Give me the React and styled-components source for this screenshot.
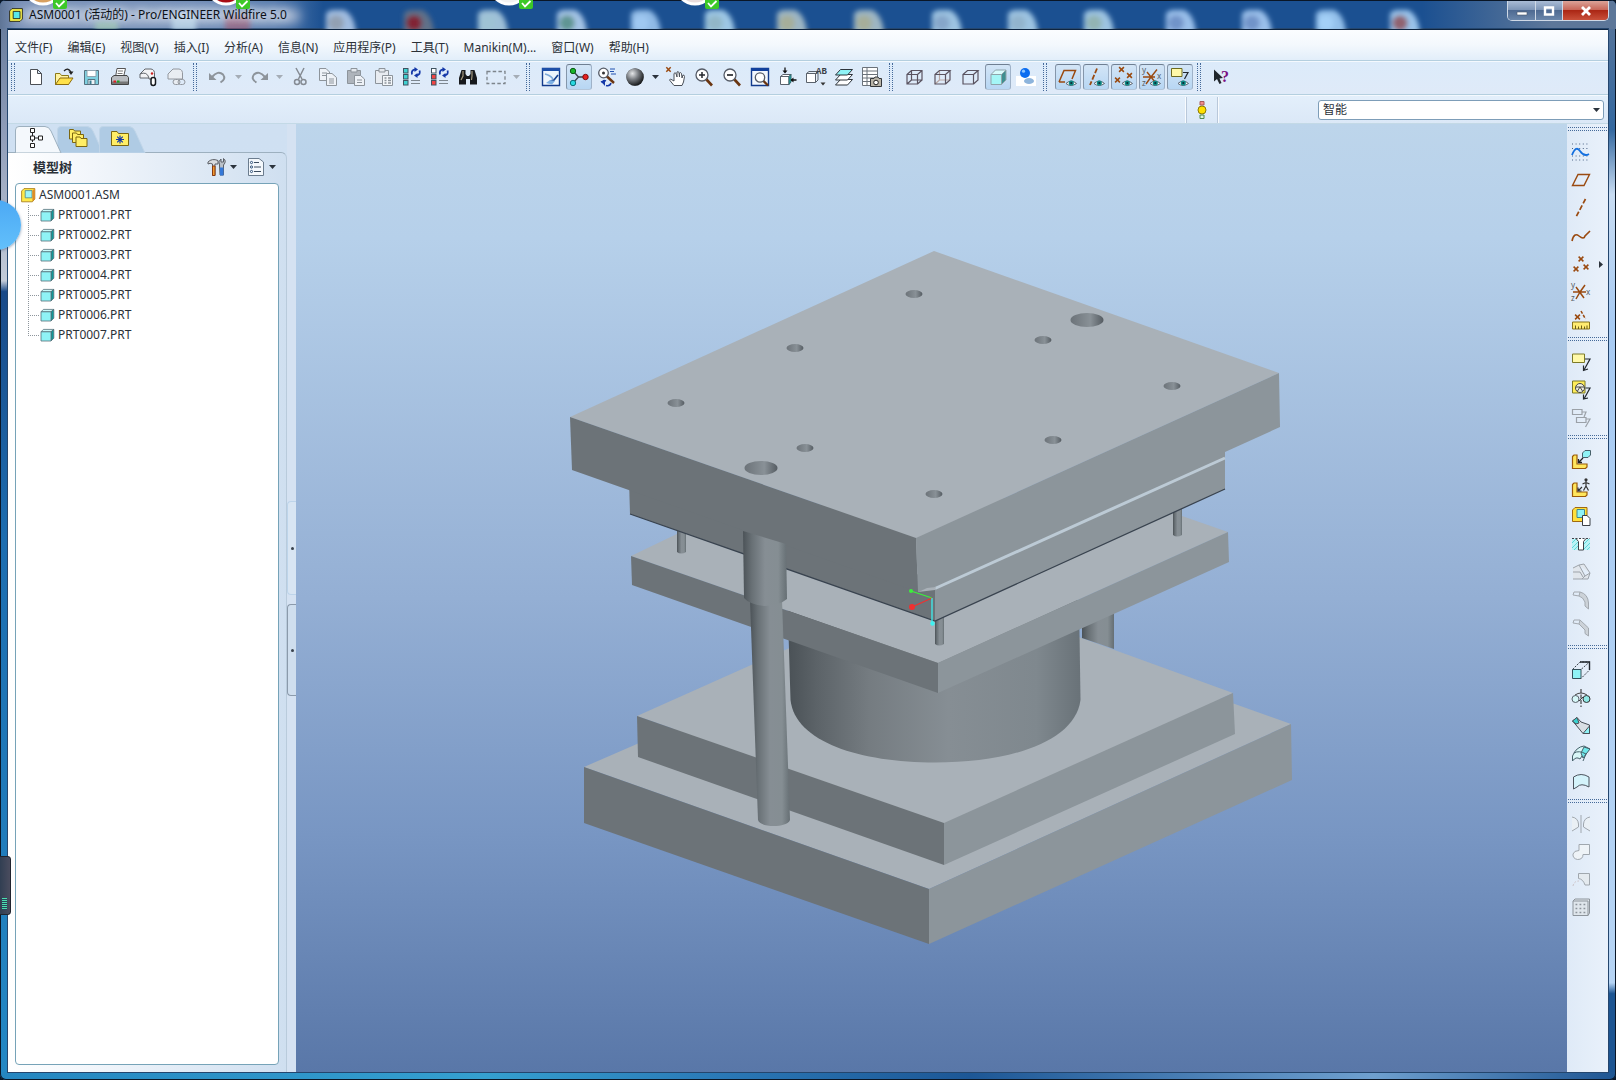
import React from 'react';
import styled, { createGlobalStyle, css } from 'styled-components';

const GlobalStyle = createGlobalStyle`
  * { box-sizing: border-box; }
  html, body { margin: 0; padding: 0; background: #0a1626; }
  body, button, select {
    font-family: "Noto Sans", "Noto Sans CJK SC", sans-serif;
    font-size: 12px;
    line-height: 16px;
    color: #2b3138;
  }
`;

/* ---------- window chrome ---------- */

const Window = styled.div`
  position: relative;
  display: flex;
  flex-direction: column;
  height: 100vh;
  min-height: 960px;
  padding: 0 8px 8px;
  overflow: hidden;
  border-radius: 6px;
  background:
    linear-gradient(90deg, #2586c0, #35a0d0 30%, #2a78b6 45%, #1d5796 60%, #6fa0cf 85%, #1e5592) bottom / 100% 8px no-repeat,
    linear-gradient(#5f7596, #8e9cb8 12%, #c3cbd8 26%, #1a4a88 27%, #1d6db0 50%, #2488c4 100%) left / 8px 100% no-repeat,
    linear-gradient(#5c7699, #34689f 12%, #c8dcf2 18%, #a8cbf3 30%, #b6d4f4 91%, #1d5592 92%) right / 8px 100% no-repeat,
    #1d4f8d;
  box-shadow: inset 0 0 0 1px #0a1626;
`;

const TitleBar = styled.header`
  display: grid;
  grid-template-columns: minmax(0, 1fr) auto;
  align-items: start;
  flex: none;
  height: 29px;
  margin: 0 -8px;
  padding-right: 7px;
  border-top: 1px solid #0a1626;
  background:
    linear-gradient(90deg, #5f7596, rgba(130, 150, 185, 0.9) 1%, rgba(140, 160, 195, 0.75) 12%, rgba(120, 148, 190, 0.6) 17%, rgba(29, 79, 141, 0) 20%),
    linear-gradient(90deg, rgba(29, 79, 141, 0) 88%, #5d7799 96%),
    #1b5091;
`;

const Backdrop = styled.svg`
  position: absolute;
  top: 1px;
  left: 0;
  width: 1616px;
  height: 28px;
`;

const Caption = styled.div`
  position: relative;
  display: flex;
  align-items: center;
  gap: 5px;
  height: 28px;
  padding-left: 8px;
`;

const WindowTitle = styled.h1`
  margin: 0;
  font-size: 12px;
  line-height: 16px;
  font-weight: 400;
  color: #0c1016;
  text-shadow: 0 0 6px #c9d6e8, 0 0 8px #c9d6e8;
  white-space: nowrap;
`;

const CaptionButtons = styled.div`
  position: relative;
  display: flex;
  border: 1px solid #cfd9e6;
  border-top: 0;
  border-radius: 0 0 5px 5px;
  overflow: hidden;
`;

const CaptionButton = styled.button`
  display: grid;
  place-items: center;
  width: ${(p) => (p.$close ? 46 : 27)}px;
  height: 19px;
  padding: 0;
  border: 0;
  border-left: ${(p) => (p.$first ? '0' : '1px solid #cfd9e6')};
  background: ${(p) =>
    p.$close
      ? 'linear-gradient(#dba398, #c8685a 45%, #ab2715 50%, #c9503a)'
      : 'linear-gradient(#a9bcd6, #7f97b8 45%, #4e6a92 50%, #6a86aa)'};
`;

const Client = styled.div`
  display: flex;
  flex-direction: column;
  flex: 1;
  min-height: 0;
  border-top: 1px solid #0d2440;
  background: #dde9f7;
  box-shadow: 0 0 0 1px #24466e;
`;

const MenuBar = styled.nav`
  display: flex;
  align-items: center;
  gap: 1px;
  flex: none;
  height: 31px;
  padding-top: 5px;
  border-bottom: 1px solid #b4cfdf;
  background: linear-gradient(#fbfdff, #f3f8fd 50%, #e2eefa);
`;

const MenuItem = styled.button`
  padding: 0 7px;
  border: 0;
  background: none;
  white-space: nowrap;
`;

/* ---------- tool bars ---------- */

const ToolStrip = styled.div`
  display: flex;
  flex: none;
  ${(p) =>
    p.$vertical
      ? css`
          flex-direction: column;
          width: 41px;
          background: linear-gradient(90deg, #dfeaf7, #e9f1fb);
        `
      : css`
          align-items: center;
          height: 34px;
          padding-bottom: 2px;
          border-top: 1px solid #f4f9fe;
          border-bottom: 1px solid #b4cfdf;
          background: linear-gradient(#dcebfa, #dfeaf8);
        `}
`;

const Handle = styled.div`
  flex: none;
  ${(p) =>
    p.$vertical
      ? css`
          height: 4px;
          margin: 3px 1px 7px 1px;
          border-top: 1px dotted #456a9a;
          border-bottom: 1px dotted #456a9a;
        `
      : css`
          width: 4px;
          height: 28px;
          margin: 0 7px 0 3px;
          border-left: 1px dotted #456a9a;
          border-right: 1px dotted #456a9a;
        `}
`;

const ToolButton = styled.button`
  display: grid;
  place-items: center;
  flex: none;
  width: ${(p) => (p.$narrow ? 20 : 26)}px;
  height: 26px;
  margin: 1px;
  padding: 0;
  border: 1px solid transparent;
  border-radius: 3px;
  background: none;
  ${(p) =>
    p.$pressed &&
    css`
      border-color: #6f7f92 #9fb2c8 #b4c6da #8596aa;
      background: linear-gradient(#d3e5f6, #b7d6f3);
    `}
`;

const Glyph = styled.svg`
  display: block;
  overflow: visible;
`;

const ArrowButton = styled.button`
  display: grid;
  place-items: center;
  width: 13px;
  height: 20px;
  padding: 0;
  border: 0;
  background: none;
`;

const FilterRow = styled.div`
  display: flex;
  justify-content: flex-end;
  align-items: center;
  gap: 100px;
  flex: none;
  height: 29px;
  padding-right: 4px;
  border-top: 1px solid #f4f9fe;
  border-bottom: 1px solid #c3d9e6;
  background: linear-gradient(#e3effb, #dbe8f7);
`;

const StatusLight = styled.div`
  display: grid;
  place-items: center;
  width: 32px;
  height: 26px;
  border: solid #b9c8da;
  border-width: 0 1px;
  box-shadow: 1px 0 0 #f8fbfe, -1px 0 0 #f8fbfe;
`;

const SelectBox = styled.div`
  position: relative;
  width: 286px;
`;

const FilterSelect = styled.select`
  appearance: none;
  display: block;
  width: 100%;
  height: 20px;
  padding: 0 20px 0 4px;
  border: 1px solid #7d9db8;
  border-radius: 3px;
  background: #fff;
`;

const SelectArrow = styled.svg`
  position: absolute;
  right: 4px;
  top: 8px;
  pointer-events: none;
`;

/* ---------- navigator ---------- */

const Workspace = styled.main`
  display: flex;
  flex: 1;
  min-height: 0;
`;

const Navigator = styled.aside`
  display: flex;
  flex: none;
  width: 288px;
  background: linear-gradient(#cfe0f2, #d3e2f3);
`;

const NavColumn = styled.div`
  display: flex;
  flex-direction: column;
  flex: 1;
  min-width: 0;
`;

const TabList = styled.div`
  display: flex;
  flex: none;
  height: 28px;
  padding: 2px 0 0 7px;
`;

const Tab = styled.button`
  position: relative;
  display: grid;
  place-items: center start;
  width: 42px;
  height: 26px;
  padding: 0 0 2px 11px;
  border: 0;
  background: none;
  z-index: ${(p) => (p.$active ? 1 : 0)};
`;

const TabShape = styled.svg`
  position: absolute;
  left: 0;
  top: 0;
`;

const TabGlyph = styled.span`
  position: relative;
  display: block;
  line-height: 0;
`;

const Panel = styled.section`
  display: flex;
  flex-direction: column;
  flex: 1;
  min-height: 0;
  padding: 0 7px 7px;
  border-top: 1px solid #9db0bf;
  border-right: 1px solid #b9cbdc;
  border-radius: 0 6px 0 0;
  background: linear-gradient(90deg, #ffffff, #f2f6fb 30%, #cfdff0);
`;

const PanelHeader = styled.div`
  display: flex;
  align-items: center;
  flex: none;
  height: 30px;
  padding: 0 0 3px 18px;
`;

const PanelTitle = styled.h2`
  flex: 1;
  margin: 0;
  font-size: 13px;
  line-height: 16px;
  font-weight: 700;
`;

const HeaderTool = styled.div`
  display: flex;
  align-items: center;
  margin-left: 4px;
`;

const Tree = styled.ul`
  flex: 1;
  min-height: 0;
  margin: 0;
  padding: 1px 0 0 4px;
  list-style: none;
  border: 1px solid #76a3b8;
  border-radius: 4px;
  background: #fff;
`;

const Branch = styled.ul`
  margin: 0 0 0 8px;
  padding: 0;
  list-style: none;
`;

const Leaf = styled.li`
  display: flex;
  align-items: center;
  height: 20px;
  background:
    linear-gradient(#fff, #fff) 0 11px / ${(p) => (p.$last ? '1px 9px' : '0 0')} no-repeat,
    repeating-linear-gradient(90deg, #8d959c 0 1px, transparent 1px 2px) 0 10px / 12px 1px no-repeat,
    repeating-linear-gradient(#8d959c 0 1px, transparent 1px 2px) 0 0 / 1px 100% no-repeat;
  padding-left: 11px;
`;

const NodeButton = styled.button`
  display: flex;
  align-items: center;
  gap: 3px;
  height: 20px;
  padding: 0;
  border: 0;
  background: none;
`;

const Sash = styled.div`
  display: flex;
  flex-direction: column;
  justify-content: flex-start;
  gap: 9px;
  flex: none;
  width: 9px;
  padding-top: 377px;
  background: #d5e2f2;
`;

const Grip = styled.button`
  display: grid;
  place-items: center;
  width: 9px;
  height: ${(p) => (p.$raised ? 92 : 94)}px;
  padding: 0;
  border: 1px solid ${(p) => (p.$raised ? '#8b9aab' : '#bdd4ea')};
  border-right: 0;
  border-radius: 4px 0 0 4px;
  background: ${(p) => (p.$raised ? '#cfdeee' : '#d8e5f3')};
  &::after {
    content: "";
    width: 3px;
    height: 3px;
    border-radius: 50%;
    background: #39424e;
  }
`;

const Viewport = styled.section`
  flex: 1;
  min-width: 0;
  background: linear-gradient(#bdd5eb, #b6d0ea 12%, #94afd4 50%, #7896c3 75%, #5977a8);
`;

const Scene = styled.svg`
  display: block;
  width: 100%;
  height: 100%;
`;

/* ---------- desktop widgets that overlap the window ---------- */

const Badges = styled.svg`
  position: absolute;
  left: 0;
  top: 0;
  pointer-events: none;
`;

const Bubble = styled.div`
  position: absolute;
  left: -29px;
  top: 200px;
  width: 50px;
  height: 50px;
  border-radius: 50%;
  background: linear-gradient(#4ca9f4, #62c0fb);
  box-shadow: 0 1px 3px rgba(60, 90, 130, 0.6);
`;

const Meter = styled.div`
  position: absolute;
  left: -3px;
  top: 856px;
  display: flex;
  align-items: flex-end;
  width: 14px;
  height: 59px;
  padding: 4px;
  border: 1px solid #20242e;
  border-radius: 3px;
  background: linear-gradient(90deg, #2c3c50, #4a4c5e);
  &::after {
    content: "";
    flex: none;
    width: 5px;
    height: 12px;
    background: repeating-linear-gradient(#4be0b0 0 1px, #26465a 1px 2px);
  }
`;

/* ---------- icons, all on a 20 x 20 grid ---------- */

const BR = '#9a4a10';
const CY = '#8ff3f6';

const Eye = () => (
  <g>
    <path d="M8 16.500Q13 11.500 18.500 16.500Q13 20.500 8 16.500Z" fill="#fff" stroke="#5d6670" strokeWidth="1" />
    <circle cx="13.300" cy="16" r="2.600" fill="#0d8a86" />
    <circle cx="13.300" cy="16" r="1.100" fill="#082c38" />
  </g>
);

const Cross = ({ x, y, s = 2, c = BR }) => (
  <path d={`M${x - s} ${y - s}l${2 * s} ${2 * s}M${x + s} ${y - s}l${-2 * s} ${2 * s}`} stroke={c} strokeWidth="1.500" />
);

const Cube = ({ front, side = front, stroke = '#4e5661' }) => (
  <g stroke={stroke} fill={front} strokeLinejoin="round">
    <path d="M3 7.500L7.500 3H18L13.500 7.500Z" fill="#d8fcfc" />
    <path d="M13.500 7.500L18 3V13L13.500 17.500Z" fill={side} />
    <path d="M3 7.500H13.500V17.500H3Z" />
  </g>
);

const Lens = ({ children }) => (
  <g>
    <path d="M12 12L18 18.500" stroke="#6a3510" strokeWidth="2.600" />
    <circle cx="8" cy="8" r="6" fill="#fff" stroke="#555b66" strokeWidth="1.300" />
    {children}
  </g>
);

const Bracket = () => (
  <path d="M1.500 6.500L3 5H6V14H16V17L14.500 18.500H1.500Z" fill="#ffe65c" stroke="#9a5a08" strokeWidth="1.200" />
);

const Regen = ({ c }) => (
  <g>
    {[1, 7, 13].map((y, i) => (
      <rect key={y} x="1.500" y={y + 0.500} width="4.500" height="4.500" fill={i === 0 && c === 'red' ? '#fff' : c === 'red' ? '#f04444' : '#3fd0d0'} stroke="#3f5260" />
    ))}
    <path d="M10 7.500Q9 3 13 2.500M17.500 3.500Q19 7.500 14.500 8.500" fill="none" stroke="#1438a8" strokeWidth="1.800" />
    <path d="M12.500 0L16 2.500L12.500 5ZM15.500 6L12 8.500L15.500 11Z" fill="#1438a8" />
    <path d="M9 13.500H18M9 16.500H18" stroke="#7d868f" />
  </g>
);

const Folder = ({ x, y, w = 11, h = 8 }) => (
  <path d={`M${x} ${y}h4l1 1.500h${w - 5}v${h}h${-w}Z`} fill="#ffee66" stroke="#7c6710" />
);

const ICONS = {
  app: (
    <g stroke="#111">
      <path d="M2 5L5 2H18V15L15 18H2Z" fill="#f4ee4a" />
      <path d="M6.500 5.500H15V14.500H6.500Z" fill="#59e8ea" />
    </g>
  ),
  newFile: <path d="M4.500 2.500H11.500L15.500 6.500V17.500H4.500ZM11.500 2.500V6.500H15.500" fill="#fff" stroke="#4b4f55" />,
  open: (
    <g>
      <path d="M1.500 17.500V6.500H6L7.500 8.500H14.500V17.500Z" fill="#fff3a0" stroke="#8c7a18" />
      <path d="M1.500 17.500L6 11H19L14.500 17.500Z" fill="#ffe14a" stroke="#8c6c10" />
      <path d="M10 4Q14 0 17 5" fill="none" stroke="#222" strokeWidth="1.300" />
      <path d="M14.500 4.500H19.500L17 8Z" fill="#222" />
    </g>
  ),
  save: (
    <g>
      <path d="M2.500 3.500H16.500V17.500H2.500Z" fill="#7fd0e0" stroke="#56707e" />
      <path d="M5 3.500H14V9.500H5Z" fill="#fff" stroke="#8fa4b0" />
      <path d="M6 12.500H13V17.500H6Z" fill="#eef4f8" stroke="#56707e" />
      <path d="M7.500 13.500H9.500V17H7.500Z" fill="#3a7c90" />
    </g>
  ),
  print: (
    <g>
      <path d="M7 1.500H15.500L13.500 10H5.500Z" fill="#fff" stroke="#555" />
      <path d="M8 4H13M7.500 6.500H12.500" stroke="#777" />
      <path d="M1.500 10.500L4 8.500H17L18.500 10.500V17.500H1.500Z" fill="#b9bcc0" stroke="#444" />
      <path d="M2 14.500H18V17H2Z" fill="#777" />
      <path d="M3.500 13.500H6V15.500H3.500Z" fill="#e02020" />
      <path d="M7 13.500H9.500V15.500H7Z" fill="#20a020" />
    </g>
  ),
  mail: (
    <g>
      <path d="M2 11V7L7 2H13Q17 2.500 16.500 8V12H11V11Z" fill="#f2f3f5" stroke="#62666c" />
      <path d="M2 7Q9 4 11 11" fill="none" stroke="#62666c" />
      <circle cx="14" cy="6.500" r="1.200" fill="#c22" />
      <rect x="13" y="10.500" width="4.500" height="8" rx="2.200" fill="#fff" stroke="#15181c" strokeWidth="1.500" />
    </g>
  ),
  link: (
    <g stroke="#92979e" fill="#e9edf2">
      <path d="M2 11V7L7 2H13Q17 2.500 16.500 8V12H2Z" />
      <rect x="7" y="12.500" width="7" height="5" rx="2.500" />
      <rect x="12" y="12.500" width="7" height="5" rx="2.500" fill="none" />
    </g>
  ),
  undo: (
    <g>
      <path d="M4 10Q10 3 15 7.500Q18.500 12 12.500 15.500" fill="none" stroke="#8d949b" strokeWidth="2" />
      <path d="M1 6V13H8.500Z" fill="#8d949b" />
    </g>
  ),
  redo: (
    <g>
      <path d="M16 10Q10 3 5 7.500Q1.500 12 7.500 15.500" fill="none" stroke="#8d949b" strokeWidth="2" />
      <path d="M19 6V13H11.500Z" fill="#8d949b" />
    </g>
  ),
  cut: (
    <g fill="none" stroke="#858b93" strokeWidth="1.500">
      <path d="M6 1L12 12M14 1L8.500 12" />
      <circle cx="7" cy="15" r="2.500" />
      <circle cx="13.500" cy="15" r="2.500" />
    </g>
  ),
  copy: (
    <g fill="#eef2f7" stroke="#8d949b">
      <path d="M1.500 1.500H8L11.500 5V13.500H1.500ZM4 6H9M4 8.500H9" />
      <path d="M8.500 6.500H14L18.500 10.500V18.500H8.500ZM11 12H16M11 14H16M11 16H16" />
    </g>
  ),
  paste: (
    <g stroke="#8d949b">
      <path d="M1.500 3.500H14.500V16.500H1.500Z" fill="#aeb4bb" />
      <path d="M5 1.500H11V5H5Z" fill="#e4e8ed" />
      <path d="M8.500 8.500H14.500L18.500 12V18.500H8.500ZM11 13H16M11 15.500H16" fill="#eef2f7" />
    </g>
  ),
  pasteSpecial: (
    <g stroke="#8d949b">
      <path d="M1.500 3.500H14.500V16.500H1.500Z" fill="#e8ecf1" />
      <path d="M5 1.500H11V5H5Z" fill="#e4e8ed" />
      <path d="M8.500 8.500H18.500V18.500H8.500Z" fill="#f4f7fa" />
      <path d="M10.500 11H12.500M14 11H17M10.500 13.500H12.500M14 13.500H17M10.500 16H12.500M14 16H17" strokeWidth="1.400" />
    </g>
  ),
  regen: <Regen c="teal" />,
  regenAll: <Regen c="red" />,
  find: (
    <g fill="#17191c">
      <path d="M3.500 3H7.500V7L9 9H11L12.500 7V3H16.500L19 11V17.500H12V12H8V17.500H1V11Z" />
      <path d="M5 4V9L3 13M14 4V9L13.500 13" stroke="#a49a80" fill="none" strokeWidth="1.200" />
    </g>
  ),
  select: <path d="M1 4.500H19V16.500H1Z" fill="none" stroke="#7e858c" strokeWidth="1.300" strokeDasharray="3.500 2.200" />,
  repaint: (
    <g>
      <path d="M1.500 1.500H18.500V18.500H1.500Z" fill="#eef5fc" stroke="#123a8c" strokeWidth="1.400" />
      <path d="M1 1H19V4H1Z" fill="#1d4fa8" />
      <path d="M4 7Q9 8 12 12" fill="none" stroke="#7da9d8" strokeWidth="1.500" />
      <path d="M9 14L13 13L17 8" fill="none" stroke="#17418e" strokeWidth="1.700" />
      <path d="M9 13L14 14L11 17.500L5 16Z" fill="#7db0e4" />
    </g>
  ),
  spin: (
    <g>
      <path d="M5 5L9.500 10H17M9.500 10L4 16" fill="none" stroke="#3c444d" strokeWidth="1.300" />
      <circle cx="4" cy="4" r="2.700" fill="#18b428" stroke="#0a5c14" />
      <circle cx="16.500" cy="10" r="2.700" fill="#e62020" stroke="#7c0c0c" />
      <circle cx="4" cy="16" r="2.700" fill="#28d8e0" stroke="#0c707c" />
    </g>
  ),
  orient: (
    <g>
      <path d="M9.500 9L17 16" stroke="#6a3510" strokeWidth="2.400" />
      <circle cx="6.500" cy="6" r="4.800" fill="#fff" stroke="#555b66" strokeWidth="1.300" />
      <circle cx="6.500" cy="6" r="1.500" fill="#333" />
      <path d="M13 2H18M13 4.500H17M14 7H19" stroke="#2352b0" />
      <path d="M5 16Q6 12.500 9 14M14 16Q13 19.500 9 18.500" fill="none" stroke="#1438a8" strokeWidth="1.500" />
      <path d="M3.500 14H8V19Z" fill="#1438a8" />
    </g>
  ),
  shade: (
    <g>
      <circle cx="10" cy="10" r="8.700" fill="#5a5e62" />
      <circle cx="10" cy="10" r="8.700" fill="url(#ball)" />
    </g>
  ),
  pan: (
    <g>
      <Cross x={2.500} y={2.500} s={2.200} />
      <path d="M8 18.500L3.500 13L4.500 12L8 14V6.500Q9 5 10 6.500L11 10V5Q12 4 13 5.500L13.500 10V6Q15 5 15.500 6.500L16 11L17 8Q18.500 8 18.500 9.500L17.500 15L16 18.500Z" fill="#fff" stroke="#4b5058" />
    </g>
  ),
  zoomIn: <Lens><path d="M5 8H11M8 5V11" stroke="#26292e" strokeWidth="1.500" /></Lens>,
  zoomOut: <Lens><path d="M5 8H11" stroke="#26292e" strokeWidth="1.700" /></Lens>,
  refit: (
    <g>
      <path d="M1.500 1.500H18.500V18.500H1.500Z" fill="#f2f7fd" stroke="#123a8c" strokeWidth="1.400" />
      <path d="M1 1H19V4H1Z" fill="#12409c" />
      <path d="M13 13.500L18 18.500" stroke="#6a3510" strokeWidth="2.400" />
      <circle cx="10" cy="10.500" r="4.700" fill="#fff" stroke="#555b66" strokeWidth="1.300" />
    </g>
  ),
  view3d: (
    <g>
      <path d="M2.500 9.500L5 7.500H13L11 9.500Z M2.500 9.500H11V17.500H2.500Z" fill="#fff" stroke="#5a626c" />
      <path d="M11 9.500L13 7.500V15L11 17.500Z" fill="#18b0a8" stroke="#37636a" />
      <path d="M7 0.500V5M13 13H18.500" stroke="#111" strokeWidth="1.300" />
      <path d="M4.500 3.500H9.500L7 6.500ZM15.500 10.500V15.500L12.500 13Z" fill="#111" />
    </g>
  ),
  namedView: (
    <g>
      <path d="M0.500 6.500L3 4.500H12L9.500 6.500ZM9.500 6.500L12 4.500V13L9.500 15.500Z" fill="#e6eef6" stroke="#5a626c" />
      <path d="M0.500 6.500H9.500V15.500H0.500Z" fill="#fff" stroke="#5a626c" />
      <path d="M14.500 15.500H19.500L17 18.500Z" fill="#333" />
      <text x="10" y="7" fontSize="9" fontWeight="700" fill="#3a4048" fontFamily="Liberation Mono, monospace">AB</text>
    </g>
  ),
  layers: (
    <g stroke="#2e343b" strokeLinejoin="round">
      <path d="M1.500 18L6.500 12.500H18.500L13.500 18Z" fill="#fff" />
      <path d="M1.500 13L6.500 7.500H18.500L13.500 13Z" fill="#fff" />
      <path d="M1.500 8L6.500 2.500H18.500L13.500 8Z" fill={CY} />
    </g>
  ),
  viewManager: (
    <g>
      <path d="M0.500 0.500H15.500V18.500H0.500ZM0.500 4H15.500M0.500 7.500H15.500M0.500 11H15.500M0.500 14.500H15.500M5 0.500V18.500" fill="#fff" stroke="#6b727a" />
      <path d="M8.500 11.500H12L13 10H16L17 11.500H19.500V19.500H8.500Z" fill="#b9b4a8" stroke="#33363a" />
      <circle cx="14" cy="15.500" r="2.300" fill="#fff" stroke="#222" />
    </g>
  ),
  wireframe: (
    <path d="M3 7.500H13.500V17H3ZM7.500 3.500H18V13H7.500ZM3 7.500L7.500 3.500M13.500 7.500L18 3.500M3 17L7.500 13M13.500 17L18 13" fill="none" stroke="#5a5360" strokeWidth="1.200" />
  ),
  hidden: (
    <g fill="none" stroke="#5a5360" strokeWidth="1.200">
      <path d="M7.500 3.500V13H18M7.500 13L3 17" stroke="#b9a6a2" />
      <path d="M3 7.500H13.500V17H3ZM3 7.500L7.500 3.500H18L13.500 7.500M18 3.500V13L13.500 17" />
    </g>
  ),
  noHidden: <path d="M3 7.500H13.500V17H3ZM3 7.500L7.500 3.500H18L13.500 7.500M18 3.500V13L13.500 17" fill="none" stroke="#5a5360" strokeWidth="1.200" />,
  shaded: <Cube front="#a4f6f6" side="#3f8f90" stroke="#8fa4aa" />,
  enhanced: (
    <g>
      <path d="M0 9H20V19H0Z" fill="#fff" />
      <ellipse cx="13" cy="14" rx="5" ry="3" fill="#8db4dc" />
      <circle cx="9" cy="6" r="5" fill="#0a6cf0" />
      <circle cx="7.500" cy="4.200" r="1.600" fill="#8cc4ff" />
    </g>
  ),
  planeEye: <g><path d="M1 15L6 3.500H17.500L14 12M1 15H7" fill="none" stroke={BR} strokeWidth="1.500" /><Eye /></g>,
  axisEye: <g><path d="M11 1.500L4 18" stroke={BR} strokeWidth="1.800" strokeDasharray="5 2" /><Eye /></g>,
  pointEye: <g><Cross x={7.500} y={2.500} s={2.400} /><Cross x={15.500} y={8.500} s={2.400} /><Cross x={3.500} y={13} s={2.400} /><Eye /></g>,
  csysEye: (
    <g>
      <path d="M1 10H13M9 10L15 2.500M9 10L4 17M5 5L13 15" stroke={BR} strokeWidth="1.400" />
      <text x="0" y="6" fontSize="8" fill="#555c64">y</text>
      <text x="15" y="12" fontSize="8" fill="#555c64">x</text>
      <text x="0" y="19" fontSize="8" fill="#555c64">z</text>
      <Eye />
    </g>
  ),
  noteEye: <g><path d="M1.500 1.500H12V9.500H1.500Z" fill="#fff9a8" stroke="#6d6a20" /><path d="M13 5.500H18L14.500 12" fill="none" stroke="#23282e" strokeWidth="1.200" /><Eye /></g>,
  help: (
    <g>
      <path d="M2 2.500L2 14.500L5 12L7.500 17L9.500 16L7.500 11.500L11 11Z" fill="#20262c" />
      <text x="9" y="15" fontSize="16" fontWeight="700" fill="#7a1080" fontFamily="Liberation Serif, serif">?</text>
    </g>
  ),
  light: (
    <g>
      <path d="M8 1.500H12V5H8Z" fill="#f28c8c" stroke="#a85a5a" />
      <path d="M8 15H12V18.500H8Z" fill="#dff5df" stroke="#4f8a4f" />
      <circle cx="10" cy="10" r="4" fill="#ffe000" stroke="#8a7a08" />
    </g>
  ),
  tree: (
    <g fill="#fff" stroke="#222">
      <path d="M6.500 5V14M6.500 10H13" />
      <path d="M4.500 0.500H8.500V4.500H4.500ZM4.500 8H8.500V12H4.500ZM4.500 15.500H8.500V19.500H4.500ZM12.500 8H16.500V12H12.500Z" />
    </g>
  ),
  folders: <g><Folder x={1.500} y={1.500} /><Folder x={4.500} y={5} /><Folder x={8} y={9} /></g>,
  favorites: (
    <g>
      <path d="M1.500 3.500H7L8.500 5.500H18.500V17.500H1.500Z" fill="#ffee66" stroke="#7c6710" />
      <path d="M10 7.500V15.500M6 11.500H14M7.200 8.700L12.800 14.300M12.800 8.700L7.200 14.300" stroke="#1438a8" strokeWidth="1.200" />
    </g>
  ),
  tools: (
    <g>
      <path d="M1 5Q5 1 11 3.500V7H8V18.500H5.500V7Q3 5.500 1 7Z" fill="#d9dce0" stroke="#5b5f66" />
      <path d="M5.500 9H8V18.500H5.500Z" fill="#f09a30" stroke="#8a3a10" />
      <path d="M12.500 8Q10.500 4.500 14 2V5H16.500V1.500Q20 4 16.500 8V18H13Z" fill="#b9c0c8" stroke="#5b5f66" />
      <path d="M13 10.500H16.500V18.500H13Z" fill="#3478d8" />
    </g>
  ),
  list: (
    <g>
      <path d="M2.500 1.500H13L17.500 5V18.500H2.500Z" fill="#f4f8fc" stroke="#6b7c8e" />
      <path d="M8 5.500H13M8 10H15M8 14.500H15" stroke="#3c4d60" />
      <g fill="#fff" stroke="#2b4e78"><circle cx="5.500" cy="5.500" r="1.100" /><circle cx="5.500" cy="10" r="1.100" /><circle cx="5.500" cy="14.500" r="1.100" /></g>
    </g>
  ),
  assembly: (
    <g>
      <path d="M2 5L5 2H18.500V15L15.500 18.500H2Z" fill="#ffe94a" stroke="#a07410" />
      <path d="M6.500 4.500H15V13.500H6.500Z" fill="#a0f4f6" stroke="#4d8890" />
      <path d="M15.500 4.500L18.500 2V15L15.500 18Z" fill="#e08a28" />
    </g>
  ),
  part: (
    <g stroke="#56707a">
      <path d="M2.500 6L5.500 3H18.500L15 6Z" fill="#c8fbfb" />
      <path d="M15 6L18.500 3V14L15 17.500Z" fill="#129a98" />
      <path d="M2.500 6H15V17.500H2.500Z" fill={CY} />
    </g>
  ),
  sketch: (
    <g>
      <path d="M1 2H19M1 6.500H19M1 14H19M1 18H19" stroke="#4a6284" strokeDasharray="1 2.600" />
      <path d="M1 13Q5 3 9 9T18 12" fill="none" stroke="#1470e0" strokeWidth="1.800" />
    </g>
  ),
  plane: <path d="M1.500 15.500L7 4.500H18.500L13 15.500Z" fill="none" stroke={BR} strokeWidth="1.400" />,
  axis: <path d="M14.500 1L5 19" stroke={BR} strokeWidth="1.700" strokeDasharray="5 2.200" />,
  curve: <path d="M1 15Q3 6 8 10T14 10L19 5" fill="none" stroke={BR} strokeWidth="1.600" />,
  points: <g><Cross x={10} y={5} s={2.400} /><Cross x={5} y={15} s={2.400} /><Cross x={15} y={13} s={2.400} /></g>,
  csys: (
    <g>
      <path d="M2 10H15M9 10L14 3M9 10L5 17M5 5L13 16" stroke={BR} strokeWidth="1.500" />
      <text x="0" y="6" fontSize="8" fill="#555c64">y</text>
      <text x="15" y="13" fontSize="8" fill="#555c64">x</text>
      <text x="0" y="19" fontSize="8" fill="#555c64">z</text>
    </g>
  ),
  measure: (
    <g>
      <Cross x={6.500} y={7} s={2.400} />
      <path d="M10 1L14.500 9" stroke={BR} strokeWidth="1.500" strokeDasharray="3 1.500" />
      <path d="M1.500 12H18.500V19H1.500Z" fill="#ffec70" stroke="#87751c" />
      <path d="M4.500 19V15.500M7.500 19V16.500M10.500 19V15.500M13.500 19V16.500M16 19V15.500" stroke="#6b5c14" />
    </g>
  ),
  note: <g><path d="M1.500 2H13.500V10.500H1.500Z" fill="#fff9a8" stroke="#7c7a28" /><path d="M14 7H19L13 18M12.500 13.500V18.500L17 17" fill="none" stroke="#23282e" strokeWidth="1.200" /></g>,
  symbol: (
    <g>
      <path d="M1.500 1H14V13H1.500Z" fill="#ffed5a" stroke="#7c7a28" />
      <circle cx="9" cy="8" r="4.500" fill="#f0f0e0" stroke="#444" />
      <path d="M5 7H13M6.500 11L9 7L11.500 11" fill="none" stroke="#444" />
      <path d="M14.500 8H19L13 19M12.500 14.500V19L17 18" fill="none" stroke="#23282e" strokeWidth="1.200" />
    </g>
  ),
  surface: (
    <g fill="none" stroke="#9ba1a8" strokeWidth="1.200">
      <path d="M1.500 1.500H11V6.500H1.500ZM5.500 9.500H15V14.500H5.500ZM11 4H15L13 9M15 11H19L14.500 19" />
    </g>
  ),
  assemble: (
    <g>
      <Bracket />
      <path d="M11.500 3L14 0.500H19.500V5L17 7.500H11.500Z" fill={CY} stroke="#47606a" />
      <path d="M12 8L7.500 12.500M7.500 9V12.500H11" fill="none" stroke="#222" strokeWidth="1.300" />
    </g>
  ),
  manikin: (
    <g>
      <Bracket />
      <circle cx="15" cy="1.800" r="1.600" fill="#333" />
      <path d="M15 3V8M11.500 6L15 4.500L18.500 6M15 8L12.500 12.500M15 8L17.500 12.500M11 9L7 13M7 9.500V13H10.500" fill="none" stroke="#333" strokeWidth="1.200" />
    </g>
  ),
  create: (
    <g>
      <path d="M1.500 4L4 1.500H16V13L14 15.500H1.500Z" fill="#ffe03c" stroke="#a06a10" />
      <path d="M6 3.500H13.500V11.500H6Z" fill={CY} stroke="#3f8890" />
      <path d="M11.500 9.500H16L19 12.500V19.500H11.500Z" fill="#fff" stroke="#3b3f45" />
    </g>
  ),
  hole: (
    <g>
      <path d="M1 5H5L7 8V16H1ZM19 5H15L13 8V16H19Z" fill="#b9f3f5" />
      <path d="M1 9L5 5M1 14L7 8M3 16L7 12M13 10L18 5M13 15L19 9M16 16L19 13" stroke="#5fd5da" />
      <path d="M5 4.500L7.500 7.500V16H12.500V7.500L15 4.500" fill="#fff" stroke="#3d4249" />
      <path d="M1 4.500H19" stroke="#3d4249" strokeDasharray="2 1.500" />
    </g>
  ),
  shell: <path d="M2 6L8 3L13 2L19 11L17 17H2M2 10H9L12 15M8 3L14 14L19 11M14 14L11 17" fill="#e1e6ec" stroke="#9da3aa" />,
  round: (
    <g stroke="#a3a9b0">
      <path d="M9 2Q17 4 17.500 13V19L14 16V12Q12 7 8 6Z" fill="#ccd2d8" />
      <path d="M3 2H9M2 5L8 6M3 2L2 5" fill="none" />
    </g>
  ),
  chamfer: (
    <g stroke="#a3a9b0">
      <path d="M9 2L17.500 10V18L14 15.500V12L8 6Z" fill="#ccd2d8" />
      <path d="M3 2H9M2 5L8 6M3 2L2 5" fill="none" />
    </g>
  ),
  extrude: (
    <g>
      <path d="M1.500 9.500H10V18.500H1.500Z" fill={CY} stroke="#33505a" />
      <path d="M1.500 9.500L9 2H18.500L10 9.500M18.500 2V10L10 18.500" fill="none" stroke="#3a4149" strokeDasharray="2 1.200" />
      <path d="M9 2H18.500V10" fill="none" stroke="#23282e" strokeWidth="1.400" />
    </g>
  ),
  revolve: (
    <g>
      <path d="M10 1V19" stroke="#222" strokeDasharray="4 1.500" />
      <circle cx="4.500" cy="11" r="3.500" fill="#d6f7f8" stroke="#5a626a" />
      <circle cx="15.500" cy="11" r="3.500" fill="#8fe9e6" stroke="#333" />
      <path d="M4 7Q10 3 16 7M8 13L12 9" fill="none" stroke="#444" />
    </g>
  ),
  sweep: (
    <g stroke="#4a5058">
      <path d="M1.500 5L6 1.500L10 6L18.500 9V17.500H12L5 9Z" fill="#d9dfe4" />
      <path d="M1.500 5L6 1.500L8 7L5 8Z" fill="#39d2d0" />
      <path d="M12 17.500L18.500 10V17.500Z" fill={CY} />
    </g>
  ),
  blend: (
    <g stroke="#45606a">
      <path d="M1.500 12Q5 3 13 2L19 5Q12 8 9 15Q5 12 1.500 17Z" fill="#d8f7f8" />
      <path d="M10 9L13 3L19 5L12 14Z" fill="#6fe8ea" />
      <path d="M3 9Q8 6 15 10L12 17" fill="none" />
    </g>
  ),
  fill: <path d="M2.500 5Q10 0 18 5V15Q10 10.500 6 15L2.500 17Z" fill="#d4f3fb" stroke="#4c545e" />,
  mirror: <path d="M10 1V19M1 3Q7 4 7.500 10V13L1 17M19 3Q13 4 12.500 10V13L19 17" fill="#eaf0f5" stroke="#a0a7ae" />,
  merge: <path d="M8 2.500H18.500V12.500H12Q12 17.500 6.500 17.500Q1.500 16.500 2 12Q3 8.500 8 8.500Z" fill="#eef3f7" stroke="#a0a7ae" />,
  trim: (
    <g stroke="#a0a7ae">
      <path d="M7.500 3.500H18.500V15H14Q12 9 7.500 8.500Z" fill="#e4eaef" />
      <path d="M2 16Q3 11 8 11" fill="none" stroke="#ccc4c8" strokeDasharray="2 1.500" />
    </g>
  ),
  pattern: (
    <g>
      <path d="M2 3L4 1H18.500V15L17 17.500H2Z" fill="#dfe6ec" stroke="#8d949b" />
      <path d="M2 3H17V17.500" fill="none" stroke="#8d949b" />
      <path d="M4.500 6.500H15M4.500 10.500H15M4.500 14.500H15" stroke="#8d949b" strokeWidth="1.600" strokeDasharray="1.800 2.200" />
    </g>
  ),
};

const Icon = ({ name, size = 20 }) => (
  <Glyph width={size} height={size} viewBox="0 0 20 20" fill="none" aria-hidden="true">
    {ICONS[name]}
  </Glyph>
);

const Caret = ({ color = '#2b333c' }) => (
  <svg width="7" height="4" viewBox="0 0 7 4" aria-hidden="true">
    <path d="M0 0H7L3.500 4Z" fill={color} />
  </svg>
);

/* ---------- data ---------- */

const MENUS = ['文件(F)', '编辑(E)', '视图(V)', '插入(I)', '分析(A)', '信息(N)', '应用程序(P)', '工具(T)', 'Manikin(M)...', '窗口(W)', '帮助(H)'];

const TOP_GROUPS = [
  [['newFile', '新建'], ['open', '打开'], ['save', '保存'], ['print', '打印'], ['mail', '发送邮件'], ['link', '发送链接']],
  [['undo', '撤消', { menu: '#a5adb6' }], ['redo', '重做', { menu: '#a5adb6' }], ['cut', '剪切'], ['copy', '复制'], ['paste', '粘贴'], ['pasteSpecial', '选择性粘贴'], ['regen', '再生'], ['regenAll', '再生管理器'], ['find', '查找'], ['select', '选取', { menu: '#a5adb6' }]],
  [['repaint', '重画'], ['spin', '旋转中心', { pressed: true }], ['orient', '定向模式'], ['shade', '外观库', { menu: '#2b333c' }], ['pan', '平移'], ['zoomIn', '放大'], ['zoomOut', '缩小'], ['refit', '重新调整'], ['view3d', '重定向'], ['namedView', '已命名视图'], ['layers', '层'], ['viewManager', '视图管理器']],
  [['wireframe', '线框'], ['hidden', '隐藏线'], ['noHidden', '无隐藏线'], ['shaded', '着色', { pressed: true }], ['enhanced', '增强的真实感']],
  [['planeEye', '平面显示', { pressed: true }], ['axisEye', '轴显示', { pressed: true }], ['pointEye', '点显示', { pressed: true }], ['csysEye', '坐标系显示', { pressed: true }], ['noteEye', '注释显示', { pressed: true }]],
  [['help', '上下文帮助']],
];

const SIDE_GROUPS = [
  [['sketch', '草绘'], ['plane', '基准平面'], ['axis', '基准轴'], ['curve', '基准曲线'], ['points', '基准点', { flyout: true }], ['csys', '坐标系'], ['measure', '分析']],
  [['note', '注释'], ['symbol', '符号'], ['surface', '注释元素']],
  [['assemble', '装配'], ['manikin', '人体模型'], ['create', '创建'], ['hole', '孔'], ['shell', '壳'], ['round', '倒圆角'], ['chamfer', '倒角']],
  [['extrude', '拉伸'], ['revolve', '旋转'], ['sweep', '扫描'], ['blend', '边界混合'], ['fill', '填充']],
  [['mirror', '镜像'], ['merge', '合并'], ['trim', '修剪'], ['pattern', '阵列']],
];

const PARTS = [1, 2, 3, 4, 5, 6, 7].map((n) => `PRT000${n}.PRT`);

const SideRow = styled.div`
  display: flex;
  align-items: center;
  gap: 4px;
`;

const Tool = ({ item: [name, label, opts = {}] }) => (
  <>
    <ToolButton type="button" aria-label={label} aria-pressed={opts.pressed} $pressed={opts.pressed}>
      <Icon name={name} />
    </ToolButton>
    {opts.menu && (
      <ArrowButton type="button" aria-label={`${label} 选项`}>
        <Caret color={opts.menu} />
      </ArrowButton>
    )}
  </>
);

/* ---------- drawings ---------- */

const BLOBS = [
  [340, '#b8d0ee', '#8f9aa6'], [418, '#6d7787', '#8a1220'], [492, '#b5d4e4', '#9fc4d4'], [571, '#bcd8f4', '#4f8a80'],
  [645, '#a4ccf4', '#a4ccf4'], [719, '#b4dcf4', '#8fb4c0'], [791, '#b4c8cc', '#a8ac90'], [868, '#b4c8cc', '#a8ac90'],
  [946, '#b4d8f0', '#7f9fc4'], [1022, '#b4d8f0', '#8fb0c8'], [1098, '#b4d8f0', '#8fb0a8'], [1180, '#b0d4fa', '#6888c0'],
  [1256, '#b0d4fa', '#6888c0'], [1330, '#a8d4fa', '#a8d4fa'], [1404, '#b0d8fa', '#8f4a50'],
];

const DesktopBlur = () => (
  <Backdrop viewBox="0 0 1616 28" aria-hidden="true">
    <defs>
      <filter id="soft" x="-30%" y="-30%" width="160%" height="160%"><feGaussianBlur stdDeviation="2.500" /></filter>
      <filter id="glow" x="-10%" y="-80%" width="120%" height="260%"><feGaussianBlur stdDeviation="6" /></filter>
    </defs>
    <rect x="20" y="8" width="280" height="14" rx="7" fill="#b7c3d8" filter="url(#glow)" />
    <g filter="url(#soft)">
      {BLOBS.map(([x, a, b]) => (
        <g key={x}>
          <path d={`M${x - 14} 34V13Q${x - 12} 9 ${x - 6} 9H${x + 4}Q${x + 15} 14 ${x + 16} 34Z`} fill={a} opacity="0.850" />
          <circle cx={x - 4} cy="22" r="8" fill={b} opacity="0.800" />
        </g>
      ))}
      <path d="M225 30V16Q240 10 250 16V30Z" fill="#b83a48" opacity="0.400" />
      <path d="M172 30V14Q184 8 196 14V30Z" fill="#d2ecf8" opacity="0.600" />
      <path d="M95 30V20H118V30Z" fill="#a8d4b4" opacity="0.600" />
    </g>
  </Backdrop>
);

const DesktopBadges = () => (
  <Badges width="740" height="12" viewBox="0 0 740 12" aria-hidden="true">
    {[[43, '#d8a060'], [226, '#a80c14'], [509, '#f2f2f2'], [695, '#e8dcdc']].map(([x, c]) => (
      <g key={x}>
        <circle cx={x} cy="-15" r="20.500" fill="#fff" />
        <circle cx={x} cy="-15" r="17.500" fill={c} />
        <rect x={x + 10} y="-4" width="14" height="13" rx="2" fill="#3cc828" />
        <path d={`M${x + 13} 3L${x + 16} 6.500L${x + 21.500} 1`} fill="none" stroke="#fff" strokeWidth="1.800" />
      </g>
    ))}
  </Badges>
);

const TOP = '#a9b1b8';
const LEFT = '#6c7378';
const RIGHT = '#8c959b';

const SMALL_HOLES = [[914, 294], [795, 348], [676, 403], [805, 448], [1043, 340], [1172, 386], [1053, 440], [934, 494]];
const BIG_HOLES = [[1087, 320], [761, 468]];

const Model = () => (
  <Scene viewBox="296 124 1271 948" preserveAspectRatio="xMidYMid meet" role="img" aria-label="ASM0001">
    <defs>
      <radialGradient id="ball" cx="0.350" cy="0.300" r="0.700">
        <stop offset="0" stopColor="#e4e6e8" /><stop offset="0.500" stopColor="#777b80" /><stop offset="1" stopColor="#1c1e20" />
      </radialGradient>
      <linearGradient id="drum">
        <stop offset="0" stopColor="#4a5156" /><stop offset="0.100" stopColor="#5c6368" /><stop offset="0.280" stopColor="#757c81" />
        <stop offset="0.550" stopColor="#868e94" /><stop offset="0.850" stopColor="#7f888e" /><stop offset="1" stopColor="#697278" />
      </linearGradient>
      <linearGradient id="post">
        <stop offset="0" stopColor="#4c5358" /><stop offset="0.200" stopColor="#687075" /><stop offset="0.500" stopColor="#868e94" />
        <stop offset="0.800" stopColor="#858e93" /><stop offset="1" stopColor="#666f74" />
      </linearGradient>
      <linearGradient id="bore">
        <stop offset="0" stopColor="#6c7379" /><stop offset="0.600" stopColor="#899197" /><stop offset="1" stopColor="#555c62" />
      </linearGradient>
    </defs>

    {/* base plate */}
    <path d="M584 767L957 605L1291 724L929 889Z" fill={TOP} />
    <path d="M584 767L929 889V944L584 823Z" fill={LEFT} />
    <path d="M929 889L1291 724L1292 780L929 944Z" fill={RIGHT} />

    {/* lower plate */}
    <path d="M637 716L933 584L1233 693L944 823Z" fill={TOP} />
    <path d="M637 716L944 823V865L638 757Z" fill={LEFT} />
    <path d="M944 823L1233 693L1235 734L944 865Z" fill={RIGHT} />

    {/* rear post and drum */}
    <path d="M1082 600H1114V649L1082 638Z" fill="url(#post)" />
    <path d="M787.500 600L790.500 700C795 742 860 762.500 935 762.500S1075 742 1080.500 700L1079 600Z" fill="url(#drum)" />

    {/* middle plate */}
    <path d="M631 556L731 508L1120 494L1182 516L1228 532L938 663Z" fill={TOP} />
    <path d="M631 556L938 663V693L632 585Z" fill={LEFT} />
    <path d="M938 663L1228 532L1229 562L938 693Z" fill={RIGHT} />

    {/* ejector pins */}
    <path d="M677 526V552Q681 555 686 552V529Z" fill="url(#post)" />
    <path d="M1173 505V535Q1177 538 1182 535V505Z" fill="url(#post)" />
    <path d="M935 616V644Q939 647 944 644V612Z" fill="url(#post)" />

    {/* upper block */}
    <path d="M629 480L935 580V621L630 514Z" fill={LEFT} />
    <path d="M935 588L1225 450V489L935 621Z" fill={RIGHT} />
    <path d="M630 514L935 621L1225 489" fill="none" stroke="#39434f" strokeWidth="1.300" />

    {/* top plate */}
    <path d="M570 417L934 251L1279 373L916 538Z" fill={TOP} />
    <path d="M570 417L916 538L918 592L572 470Z" fill={LEFT} />
    <path d="M916 538L1279 373L1280 427L1225 452L1224 457L935 588L926 589L918 592Z" fill={RIGHT} />
    <path d="M935 588.500L1225 458" stroke="#bccad5" strokeWidth="3" />
    <path d="M918 592L927 588L936 587L935 590Z" fill={TOP} />

    {SMALL_HOLES.map(([x, y]) => <ellipse key={x} cx={x} cy={y} rx="8.500" ry="4" fill="url(#bore)" />)}
    {BIG_HOLES.map(([x, y]) => <ellipse key={x} cx={x} cy={y} rx="16.500" ry="7" fill="url(#bore)" />)}

    {/* guide post */}
    <path d="M750 600L758 820C760 828 787 828 790 820L782 600Z" fill="url(#post)" />
    <path d="M743 531L786 544L787 599Q780 605 765 606Q750 605 744 598Z" fill="url(#post)" />

    {/* spin centre */}
    <g fill="none" strokeWidth="1.300">
      <path d="M932 598L911 591" stroke="#3bf03b" /><path d="M932 598L912 607" stroke="#f03030" /><path d="M932 598V623" stroke="#40f0f0" />
    </g>
    <circle cx="911" cy="591" r="2" fill="#3bf03b" />
    <circle cx="912" cy="607" r="3" fill="#f03030" />
    <circle cx="932.500" cy="623.500" r="2.200" fill="#40f0f0" />
  </Scene>
);

/* ---------- app ---------- */

const TABS = [['tree', '模型树', true], ['folders', '文件夹浏览器', false], ['favorites', '收藏夹', false]];

export default function App() {
  return (
    <>
      <GlobalStyle />
      <Window>
        <TitleBar>
          <DesktopBlur />
          <Caption>
            <Icon name="app" size={16} />
            <WindowTitle>ASM0001 (活动的) - Pro/ENGINEER Wildfire 5.0</WindowTitle>
          </Caption>
          <CaptionButtons>
            <CaptionButton type="button" aria-label="最小化" $first>
              <svg width="12" height="12" viewBox="0 0 12 12"><path d="M1 7H11V10H1Z" fill="#fff" stroke="#48546a" strokeWidth="0.600" /></svg>
            </CaptionButton>
            <CaptionButton type="button" aria-label="最大化">
              <svg width="12" height="12" viewBox="0 0 12 12"><path d="M2 2.500H10V9.500H2Z" fill="none" stroke="#fff" strokeWidth="2.400" /></svg>
            </CaptionButton>
            <CaptionButton type="button" aria-label="关闭" $close>
              <svg width="12" height="12" viewBox="0 0 12 12"><path d="M2 2L10 10M10 2L2 10" stroke="#fff" strokeWidth="2.800" /></svg>
            </CaptionButton>
          </CaptionButtons>
        </TitleBar>

        <Client>
          <MenuBar>
            {MENUS.map((m) => <MenuItem type="button" key={m}>{m}</MenuItem>)}
          </MenuBar>

          <ToolStrip role="toolbar">
            {TOP_GROUPS.map((group) => (
              <React.Fragment key={group[0][0]}>
                <Handle />
                {group.map((item) => <Tool key={item[0]} item={item} />)}
              </React.Fragment>
            ))}
          </ToolStrip>

          <FilterRow>
            <StatusLight><Icon name="light" /></StatusLight>
            <SelectBox>
              <FilterSelect aria-label="选取过滤器" defaultValue="smart">
                <option value="smart">智能</option>
              </FilterSelect>
              <SelectArrow width="7" height="4" viewBox="0 0 7 4"><path d="M0 0H7L3.500 4Z" fill="#2b333c" /></SelectArrow>
            </SelectBox>
          </FilterRow>

          <Workspace>
            <Navigator>
              <NavColumn>
                <TabList role="tablist">
                  {TABS.map(([name, label, active]) => (
                    <Tab key={name} type="button" role="tab" aria-label={label} aria-selected={active} $active={active}>
                      <TabShape width="50" height="27" viewBox="0 0 50 27" aria-hidden="true">
                        <path
                          d="M0.500 27V4Q0.500 0.500 4 0.500H30Q34 0.500 36 5L46 27Z"
                          fill={active ? '#f4f8fc' : '#afcbe4'}
                          stroke={active ? '#9db0bf' : '#c0d5e8'}
                        />
                      </TabShape>
                      <TabGlyph><Icon name={name} /></TabGlyph>
                    </Tab>
                  ))}
                </TabList>
                <Panel>
                  <PanelHeader>
                    <PanelTitle>模型树</PanelTitle>
                    <HeaderTool>
                      <ToolButton type="button" aria-label="设置" $narrow><Icon name="tools" /></ToolButton>
                      <ArrowButton type="button" aria-label="设置 选项"><Caret /></ArrowButton>
                    </HeaderTool>
                    <HeaderTool>
                      <ToolButton type="button" aria-label="显示" $narrow><Icon name="list" /></ToolButton>
                      <ArrowButton type="button" aria-label="显示 选项"><Caret /></ArrowButton>
                    </HeaderTool>
                  </PanelHeader>
                  <Tree>
                    <li>
                      <NodeButton type="button"><Icon name="assembly" size={16} />ASM0001.ASM</NodeButton>
                      <Branch>
                        {PARTS.map((p, i) => (
                          <Leaf key={p} $last={i === PARTS.length - 1}>
                            <NodeButton type="button"><Icon name="part" size={16} />{p}</NodeButton>
                          </Leaf>
                        ))}
                      </Branch>
                    </li>
                  </Tree>
                </Panel>
              </NavColumn>
              <Sash>
                <Grip type="button" aria-label="展开" />
                <Grip type="button" aria-label="折叠" $raised />
              </Sash>
            </Navigator>

            <Viewport><Model /></Viewport>

            <ToolStrip role="toolbar" $vertical>
              {SIDE_GROUPS.map((group) => (
                <React.Fragment key={group[0][0]}>
                  <Handle $vertical />
                  {group.map(([name, label, opts]) => (
                    <SideRow key={name}>
                      <ToolButton type="button" aria-label={label}><Icon name={name} /></ToolButton>
                      {opts && opts.flyout && (
                        <svg width="4" height="7" viewBox="0 0 4 7" aria-hidden="true"><path d="M0 0V7L4 3.500Z" fill="#2b333c" /></svg>
                      )}
                    </SideRow>
                  ))}
                </React.Fragment>
              ))}
            </ToolStrip>
          </Workspace>
        </Client>

        <DesktopBadges />
        <Bubble />
        <Meter />
      </Window>
    </>
  );
}
